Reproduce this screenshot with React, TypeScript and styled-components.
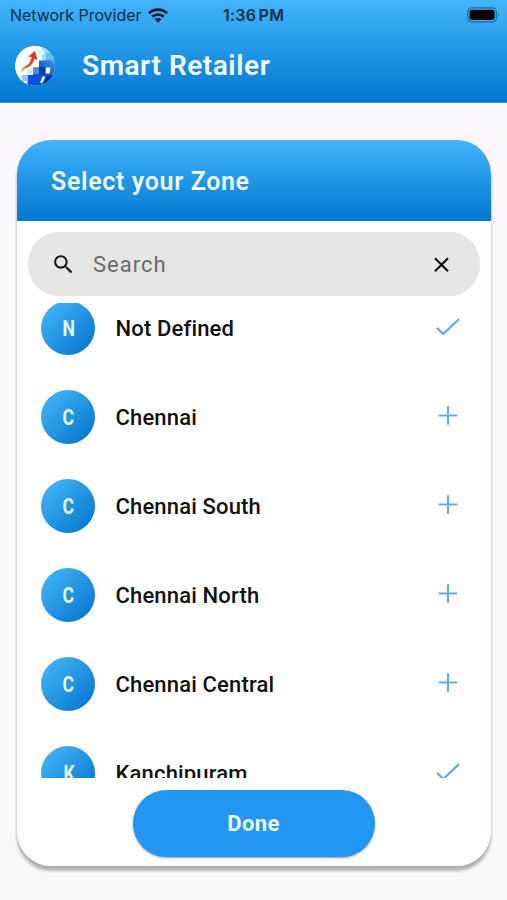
import React from "react";
import styled, { createGlobalStyle } from "styled-components";

const GlobalStyle = createGlobalStyle`
  * { box-sizing: border-box; }
  html, body { margin: 0; padding: 0; background: #fdf6ff; }
  body { overflow: hidden; font-family: Roboto, "Liberation Sans", sans-serif; }
  svg { display: block; flex: none; }
`;

const blueFade = "linear-gradient(180deg, #43b5fc 0%, #2196e6 50%, #0277d0 100%)";

const Screen = styled.main`
  width: 507px;
  height: 900px;
  display: flex;
  flex-direction: column;
  background: #fdf6ff;
`;

const TopArea = styled.header`
  height: 103px;
  flex: none;
  background: ${blueFade};
  border-bottom: 1px solid #3c8fd2;
`;

const StatusBar = styled.div`
  height: 30px;
  padding: 0 7px 0 10px;
  display: grid;
  grid-template-columns: 213px 1fr auto;
  align-items: center;
  font-family: Inter, sans-serif;
  font-size: 16px;
  line-height: 20px;
  color: #062c4c;
`;

const Carrier = styled.div`
  display: flex;
  align-items: center;
  gap: 7px;
  white-space: nowrap;
  letter-spacing: -0.04px;
`;

const Clock = styled.span`
  font-weight: 600;
  letter-spacing: 0.25px;
  word-spacing: -2px;
  white-space: nowrap;
`;

const TitleBar = styled.div`
  display: flex;
  align-items: center;
  height: 72px;
  padding-left: 14px;
  gap: 26px;
`;

const AppTitle = styled.h1`
  margin: 0;
  font-size: 28px;
  line-height: 36px;
  font-weight: 600;
  letter-spacing: 0.55px;
  color: #f4fbff;
  white-space: nowrap;
`;

const Card = styled.section`
  width: 474px;
  height: 726px;
  margin: 37px 0 0 17px;
  display: flex;
  flex-direction: column;
  flex: none;
  background: #fff;
  border-radius: 34px;
  overflow: hidden;
  box-shadow: 0 5px 3px rgba(70, 60, 70, 0.36), 0 1px 3px rgba(70, 60, 70, 0.12);
`;

const CardHeader = styled.div`
  height: 81px;
  flex: none;
  padding: 2px 0 0 34px;
  display: flex;
  align-items: center;
  background: ${blueFade};
`;

const CardTitle = styled.h2`
  margin: 0;
  font-size: 25px;
  line-height: 32px;
  font-weight: 600;
  letter-spacing: 0.65px;
  color: #f0faff;
`;

const SearchBar = styled.label`
  height: 64px;
  flex: none;
  margin: 11px 11px 0;
  padding: 0 25px 0 23px;
  display: flex;
  align-items: center;
  border-radius: 31px;
  background: #e6e6e6;
`;

const SearchInput = styled.input`
  flex: 1;
  min-width: 0;
  margin-left: 17px;
  padding: 2px 0 0;
  border: 0;
  outline: 0;
  background: transparent;
  font: 400 22px/30px Roboto, sans-serif;
  letter-spacing: 1px;
  color: #222;
  &::placeholder { color: #6b6b6b; opacity: 1; }
`;

const ZoneList = styled.ul`
  list-style: none;
  margin: 7px 0 0;
  padding: 0;
  height: 475px;
  flex: none;
  overflow: hidden;
  display: flex;
  flex-direction: column;
`;

const ZoneRow = styled.li`
  height: 89px;
  flex: none;
  padding: 0 29px 0 24px;
  display: flex;
  align-items: center;
  &:first-child { margin-top: -19.5px; }
`;

const Avatar = styled.div`
  width: 54px;
  height: 54px;
  flex: none;
  display: grid;
  place-items: center;
  border-radius: 50%;
  background: linear-gradient(135deg, #41b3f8 10%, #0878cf 90%);
`;

const Initial = styled.span`
  margin-left: 1px;
  padding-top: 1px;
  font-size: 22px;
  line-height: 26px;
  font-weight: 700;
  color: #e6f7ff;
  transform: scaleX(0.8);
`;

const ZoneName = styled.span`
  flex: 1;
  margin-left: 20.5px;
  padding-top: 1px;
  font-size: 22px;
  line-height: 30px;
  font-weight: 500;
  letter-spacing: 0.16px;
  color: #111;
  white-space: nowrap;
`;

const DoneButton = styled.button`
  width: 242px;
  height: 67px;
  flex: none;
  margin: 12.4px 0 0 116px;
  padding: 1px 1px 0 0;
  border: 0;
  border-radius: 34px;
  background: #2196f3;
  box-shadow: 0 1px 2px rgba(0, 40, 90, 0.45);
  font: 700 22px/30px Roboto, sans-serif;
  letter-spacing: 0.35px;
  color: #f2fbff;
`;

const WifiIcon = () => (
  <svg width="20" height="15" viewBox="0 0 20 15" fill="none" stroke="#03182a" strokeWidth="2.7">
    <path d="M1 5.3C6 .4 14 .4 19 5.3" />
    <path d="M4.3 8.8c3.3-3.1 8.1-3.1 11.4 0" />
    <path d="M6.7 11.2c1.9-1.7 4.7-1.7 6.6 0L10 14.7z" fill="#03182a" stroke="none" />
  </svg>
);

const BatteryIcon = () => (
  <svg width="33" height="16" viewBox="0 0 33 16">
    <rect x=".8" y=".8" width="28.6" height="14" rx="4" fill="none" stroke="#1b71a9" strokeWidth="1.3" />
    <rect x="2.6" y="2.7" width="25" height="10.3" rx="2.4" fill="#000" />
    <path d="M31 5.5q2 2.3 0 4.6z" fill="#1b71a9" />
  </svg>
);

const Logo = () => (
  <svg width="42" height="42" viewBox="0 0 42 42">
    <defs>
      <clipPath id="logo-disc"><circle cx="21" cy="20.8" r="20" /></clipPath>
      <linearGradient id="logo-arrow" x1="0" y1="1" x2="1" y2="0">
        <stop offset="0" stopColor="#f28a61" />
        <stop offset=".6" stopColor="#e43b20" />
        <stop offset="1" stopColor="#d92b18" />
      </linearGradient>
      <linearGradient id="logo-blocks" x1="0" y1="1" x2="1" y2="0">
        <stop offset="0" stopColor="#0a4df0" />
        <stop offset=".55" stopColor="#0f50c4" />
        <stop offset="1" stopColor="#3d9cf0" />
      </linearGradient>
    </defs>
    <g clipPath="url(#logo-disc)">
      <rect width="42" height="42" fill="#fff" />
      <path d="M28 0h14v16H28z" fill="#9fdaf6" />
      <path d="M24 5h6v5h-6z" fill="#d8f2fd" />
      <path d="M32 8h10v8H32z" fill="#62bdec" />
      <path d="M25 15.5h17V42H13.5V30H19v-7.5h6z" fill="url(#logo-blocks)" />
      <path d="M31 15.5h6v6h-6z" fill="#2b7ddd" />
      <path d="M19 22.5h6V29h-6z" fill="#3f8fe6" />
      <path d="M25 22h6v8h-6z" fill="#0a3eae" />
      <path d="M13.5 23.5H18V29h-4.500z" fill="#cfebfb" />
      <path d="M8 30h5.500v6H8z" fill="#8fc9f5" />
      <path d="M32 22.500h4.500l-.8 6H31.500z" fill="#eef8ff" />
      <path d="M28.500 31.500h3l-3 6.500H26z" fill="#dceeff" />
      <path d="M33 30.500h6L31 42h-3z" fill="#0a2e9c" />
      <path d="M6.5 28c1.800-7 5.500-6.500 8.300-9.500 1.400-1.600 2.200-3.600 3-6.200l-3.500-.8L21 6l2.400 9-3-1.300c-1 3.600-2.700 6.300-5 7.700-3.300 2-6.400 2-8.900 6.600z" fill="url(#logo-arrow)" />
    </g>
  </svg>
);

const SearchIcon = () => (
  <svg width="25" height="25" viewBox="0 0 24 24" fill="#151515">
    <path d="M15.5 14h-.79l-.28-.27A6.47 6.47 0 0 0 16 9.5 6.5 6.5 0 1 0 9.5 16c1.61 0 3.09-.59 4.23-1.57l.27.28v.79l5 4.99L20.49 19zm-6 0C7.01 14 5 11.99 5 9.5S7.01 5 9.5 5 14 7.01 14 9.5 11.99 14 9.5 14" />
  </svg>
);

const ClearIcon = () => (
  <svg width="27" height="27" viewBox="0 0 27 27" fill="none" stroke="#111" strokeWidth="2.2">
    <path d="m7 7.3 13 13M20 7.3l-13 13" />
  </svg>
);

const StateIcon = ({ selected }: { selected: boolean }) => (
  <svg width="28" height="28" viewBox="0 0 28 28" fill="none" stroke="#64ace3" strokeWidth="2.2">
    {selected ? <path d="m3 13.9 6.3 6L25 5.1" /> : <path d="M14 3.2v18.6M4.7 12.5h18.6" />}
  </svg>
);

const zones = [
  { name: "Not Defined", selected: true },
  { name: "Chennai", selected: false },
  { name: "Chennai South", selected: false },
  { name: "Chennai North", selected: false },
  { name: "Chennai Central", selected: false },
  { name: "Kanchipuram", selected: true },
];

export default function App() {
  return (
    <Screen>
      <GlobalStyle />
      <TopArea>
        <StatusBar>
          <Carrier>Network Provider <WifiIcon /></Carrier>
          <Clock>1:36 PM</Clock>
          <BatteryIcon />
        </StatusBar>
        <TitleBar>
          <Logo />
          <AppTitle>Smart Retailer</AppTitle>
        </TitleBar>
      </TopArea>
      <Card>
        <CardHeader><CardTitle>Select your Zone</CardTitle></CardHeader>
        <SearchBar>
          <SearchIcon />
          <SearchInput placeholder="Search" aria-label="Search" />
          <ClearIcon />
        </SearchBar>
        <ZoneList>
          {zones.map(({ name, selected }) => (
            <ZoneRow key={name}>
              <Avatar><Initial>{name[0]}</Initial></Avatar>
              <ZoneName>{name}</ZoneName>
              <StateIcon selected={selected} />
            </ZoneRow>
          ))}
        </ZoneList>
        <DoneButton>Done</DoneButton>
      </Card>
    </Screen>
  );
}
